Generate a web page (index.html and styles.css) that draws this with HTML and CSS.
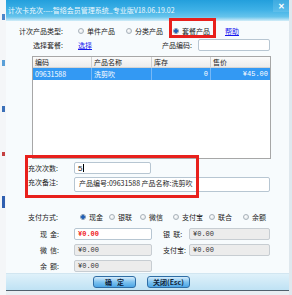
FILE: index.html
```html
<!DOCTYPE html>
<html lang="zh-CN">
<head>
    <meta charset="UTF-8">
    <meta name="viewport" content="width=device-width, initial-scale=1.0">
    <title>计次卡充次</title>
    <link rel="stylesheet" href="styles.css">
</head>
<body>
    <div class="desk">
        <div class="strip">
            <span class="dot d1"></span>
            <span class="dot d2"></span>
            <span class="dot d3"></span>
            <span class="dot d4"></span>
            <span class="dot d5"></span>
        </div>
        <div class="win">
            <div class="titlebar">
                <span class="title">计次卡充次----智络会员管理系统_专业版V18.06.19.02</span>
                <span class="close">✕</span>
            </div>
            <div class="content">
                <div class="row row-type">
                    <span class="lbl lbl-r">计次产品类型:</span>
                    <label class="opt w48"><i class="radio"></i>单件产品</label>
                    <label class="opt w47"><i class="radio"></i>分类产品</label>
                    <label class="opt w52"><i class="radio on"></i>套餐产品</label>
                    <a class="link" href="#">帮助</a>
                </div>
                <div class="row row-pick">
                    <span class="lbl lbl-r">选择套餐:</span>
                    <a class="link pick" href="#">选择</a>
                    <span class="code-lbl">产品编码:</span>
                    <span class="field code-in"></span>
                </div>

                <div class="grid">
                    <div class="grid-head">
                        <span class="c1">编码</span>
                        <span class="c2">产品名称</span>
                        <span class="c3">库存</span>
                        <span class="c4">售价</span>
                    </div>
                    <div class="grid-row sel">
                        <span class="c1">09631588</span>
                        <span class="c2">洗剪吹</span>
                        <span class="c3 num">0</span>
                        <span class="c4 num">¥45.00</span>
                    </div>
                </div>

                <div class="row row-times">
                    <span class="lbl lbl-l">充次次数:</span>
                    <span class="field times-in">5<b class="caret"></b></span>
                </div>
                <div class="row row-memo">
                    <span class="lbl lbl-l">充次备注:</span>
                    <span class="field memo-in">产品编号:09631588 产品名称:洗剪吹</span>
                </div>

                <div class="row row-pay">
                    <span class="lbl lbl-l">支付方式:</span>
                    <label class="opt p29"><i class="radio on"></i>现金</label>
                    <label class="opt p31"><i class="radio"></i>银联</label>
                    <label class="opt p33"><i class="radio"></i>微信</label>
                    <label class="opt p36"><i class="radio"></i>支付宝</label>
                    <label class="opt p34"><i class="radio"></i>联合</label>
                    <label class="opt"><i class="radio"></i>余额</label>
                </div>

                <div class="row row-money">
                    <span class="lbl lbl-m">现&nbsp;&nbsp;金:</span>
                    <span class="field money cash">¥0.00</span>
                    <span class="lbl lbl-m2">银&nbsp;&nbsp;联:</span>
                    <span class="field money off wide">¥0.00</span>
                </div>
                <div class="row row-money">
                    <span class="lbl lbl-m">微&nbsp;&nbsp;信:</span>
                    <span class="field money off">¥0.00</span>
                    <span class="lbl lbl-m2">支付宝:</span>
                    <span class="field money off wide">¥0.00</span>
                </div>
                <div class="row row-money">
                    <span class="lbl lbl-m">余&nbsp;&nbsp;额:</span>
                    <span class="field money off">¥0.00</span>
                </div>
            </div>
            <div class="footer">
                <button class="btn ok">确&nbsp;&nbsp;&nbsp;定</button>
                <button class="btn">关闭(Esc)</button>
            </div>
        </div>
        <div class="edge"></div>

        <!-- annotation boxes drawn over the window -->
        <div class="mark mark-type"></div>
        <div class="mark mark-times"></div>
    </div>
</body>
</html>
```

FILE: styles.css
```css
body {
    margin: 0;
    padding: 0;
    background: #e9eef2;
    font-family: "Noto Sans CJK SC", "Noto Sans", sans-serif;
    font-size: 7px;
    color: #222;
}
.desk {
    position: relative;
    display: flex;
    width: 292px;
    height: 295px;
    overflow: hidden;
}
.strip {
    width: 6px;
    background: #f4f6f8;
    display: flex;
    flex-direction: column;
    align-items: center;
    padding-top: 14px;
    gap: 40px;
    box-sizing: border-box;
}
.dot {
    display: block;
    width: 3px;
    height: 6px;
    background: #4d86c9;
}
.d2 { background: #5aa0d8; }
.d3 { background: #3b70b8; }
.d4 { background: #c44040; height: 4px; }
.d5 { background: #2f5fb0; height: 12px; }
.win {
    width: 283px;
    height: 291px;
    display: flex;
    flex-direction: column;
    border-bottom: 1px solid #51606c;
    box-sizing: border-box;
    background: #f7fbfd;
}
.edge {
    width: 3px;
    background: #dfe8ee;
}
.titlebar {
    height: 21px;
    display: flex;
    justify-content: space-between;
    padding: 0 0 0 2px;
    background: linear-gradient(#239fdc 0%, #3db0e6 45%, #66c4ec 80%, #d4edf8 100%);
    color: #eef8fd;
}
.title {
    margin-top: 5px;
    line-height: 10px;
    white-space: nowrap;
}
.close {
    width: 16px;
    height: 12px;
    line-height: 12px;
    text-align: center;
    color: #fff;
    font-size: 8px;
    font-weight: bold;
    background: rgba(255, 255, 255, 0.12);
}
.content {
    flex: 1;
    display: flex;
    flex-direction: column;
}
.row {
    display: flex;
    align-items: center;
    white-space: nowrap;
}
.lbl-r {
    width: 57px;
    text-align: right;
}
.lbl-l {
    width: 46px;
    padding-left: 22px;
}
.lbl-m {
    width: 53px;
    text-align: right;
}
.lbl-m2 {
    width: 37px;
    padding-left: 11px;
    box-sizing: border-box;
}
.row-type {
    height: 17px;
    margin-top: 1px;
}
.row-type .lbl {
    margin-right: 15px;
}
.opt {
    display: flex;
    align-items: center;
}
.w48 { width: 48px; }
.w47 { width: 47px; }
.w52 { width: 52px; }
.p29 { width: 29px; }
.p31 { width: 31px; }
.p33 { width: 33px; }
.p36 { width: 36px; }
.p34 { width: 34px; }
.radio {
    display: inline-block;
    width: 6px;
    height: 6px;
    margin-right: 3px;
    border: 1px solid #a9b3bb;
    border-radius: 50%;
    background: radial-gradient(circle at 40% 40%, #ffffff, #d6dce1);
    box-sizing: border-box;
}
.radio.on {
    background: radial-gradient(circle, #1f5fb8 0 1.6px, #cfe0f0 2px);
    border-color: #7d95ad;
}
.link {
    color: #1616ee;
    text-decoration: underline;
}
.row-pick {
    height: 12px;
}
.pick {
    margin-left: 15px;
}
.code-lbl {
    margin-left: 70px;
    width: 36px;
}
.field {
    display: flex;
    align-items: center;
    height: 12px;
    border: 1px solid #b7c6d2;
    border-radius: 2px;
    background: #fff;
    box-sizing: border-box;
    padding-left: 3px;
    white-space: nowrap;
}
.code-in {
    width: 72px;
}
.grid {
    margin: 5px 0 0 26px;
    width: 239px;
    height: 103px;
    border: 1px solid #a7a7a7;
    background: #fff;
    box-sizing: border-box;
}
.grid-head, .grid-row {
    display: flex;
}
.grid-head {
    height: 10px;
    line-height: 10px;
    background: linear-gradient(#fbfbfb, #ececec);
    border-bottom: 1px solid #d4d4d4;
}
.grid-head span {
    border-right: 1px solid #d0d0d0;
    padding-left: 2px;
    box-sizing: border-box;
}
.grid-row {
    height: 12px;
    line-height: 12px;
}
.grid-row span {
    padding: 0 2px;
    border-right: 1px solid #77b8f5;
    box-sizing: border-box;
}
.grid-row.sel {
    background: #3399f3;
    color: #fff;
}
.c1 { width: 59px; }
.c2 { width: 60px; }
.c3 { width: 59px; }
.c4 { width: 59px; border-right: none !important; }
.num {
    text-align: right;
    font-family: "Liberation Mono", monospace;
    font-size: 7px;
}
.row-times {
    height: 12px;
    margin-top: 3px;
}
.times-in {
    width: 77px;
    font-family: "Liberation Sans", sans-serif;
    font-size: 8px;
}
.caret {
    width: 1px;
    height: 8px;
    background: #000;
    margin-left: 1px;
}
.row-memo {
    height: 15px;
    margin-top: 3px;
    align-items: flex-start;
}
.row-memo .lbl {
    line-height: 11px;
}
.memo-in {
    width: 196px;
    height: 15px;
    align-items: flex-start;
    line-height: 11px;
    padding-left: 4px;
}
.row-pay {
    height: 12px;
    margin-top: 19px;
}
.row-pay .lbl {
    margin-right: 6px;
}
.row-money {
    height: 12px;
    margin-top: 4px;
}
.row-pay + .row-money {
    margin-top: 5px;
}
.row-money .lbl-m {
    margin-right: 15px;
}
.money {
    width: 78px;
    font-family: "Liberation Mono", monospace;
    font-size: 7px;
    color: #333;
}
.money.cash {
    color: #f01c1c;
    font-weight: bold;
}
.money.off {
    background: #ececec;
    border-color: #c7cdd2;
}
.money.wide {
    width: 81px;
    margin-left: 0;
}
.footer {
    height: 17px;
    display: flex;
    justify-content: center;
    align-items: center;
    gap: 11px;
    padding-right: 12px;
    background: linear-gradient(#dff1fa, #bfe2f4);
    border-top: 1px solid #d2e6f1;
    box-sizing: border-box;
}
.btn {
    width: 43px;
    height: 12px;
    padding: 0;
    border: 1px solid #2f6ea6;
    border-radius: 3px;
    background: linear-gradient(#d6ecfb, #7ec2ef 50%, #4ba6e6);
    color: #10243a;
    font-family: "Noto Sans CJK SC", sans-serif;
    font-size: 7px;
    font-weight: bold;
    line-height: 10px;
    cursor: pointer;
}
.mark {
    position: absolute;
    border: 3px solid #e8201c;
    box-sizing: border-box;
}
.mark-type {
    left: 169px;
    top: 18px;
    width: 47px;
    height: 20px;
}
.mark-times {
    left: 25px;
    top: 155px;
    width: 174px;
    height: 43px;
}
```
